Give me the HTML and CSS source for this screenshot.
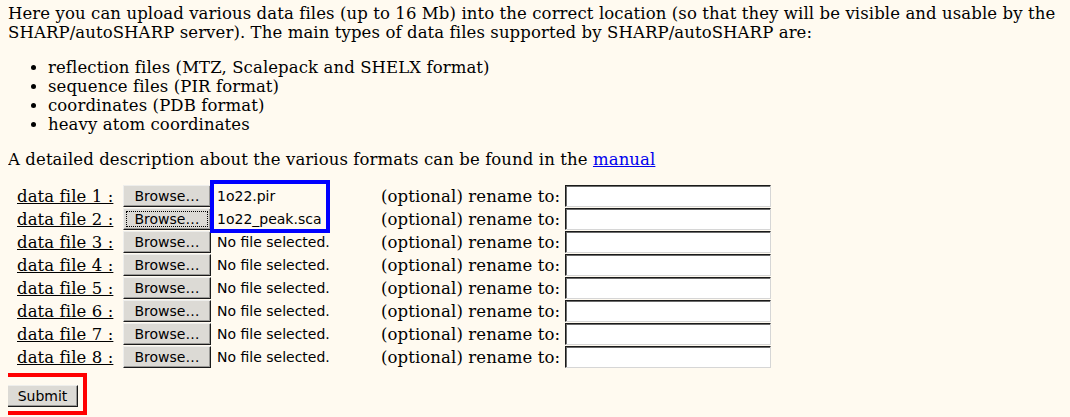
FILE: index.html
```html
<!DOCTYPE html>
<html>
<head>
<meta charset="utf-8">
<title>Upload data files</title>
<link rel="stylesheet" href="styles.css">
</head>
<body>
<p class="intro">Here you can upload various data files (up to 16 Mb) into the correct location (so that they will be visible and usable by the SHARP/autoSHARP server). The main types of data files supported by SHARP/autoSHARP are:</p>
<ul class="types">
  <li>reflection files (MTZ, Scalepack and SHELX format)</li>
  <li>sequence files (PIR format)</li>
  <li>coordinates (PDB format)</li>
  <li>heavy atom coordinates</li>
</ul>
<p class="desc">A detailed description about the various formats can be found in the <a href="#">manual</a></p>
<form class="upload">
  <div class="files">
    <span class="lbl">data file 1 :</span><span class="browse">Browse…</span><span class="fname">1o22.pir</span><span class="ren">(optional) rename to:</span><span class="field"></span>
    <span class="lbl">data file 2 :</span><span class="browse focus">Browse…</span><span class="fname">1o22_peak.sca</span><span class="ren">(optional) rename to:</span><span class="field"></span>
    <span class="lbl">data file 3 :</span><span class="browse">Browse…</span><span class="fname">No file selected.</span><span class="ren">(optional) rename to:</span><span class="field"></span>
    <span class="lbl">data file 4 :</span><span class="browse">Browse…</span><span class="fname">No file selected.</span><span class="ren">(optional) rename to:</span><span class="field"></span>
    <span class="lbl">data file 5 :</span><span class="browse">Browse…</span><span class="fname">No file selected.</span><span class="ren">(optional) rename to:</span><span class="field"></span>
    <span class="lbl">data file 6 :</span><span class="browse">Browse…</span><span class="fname">No file selected.</span><span class="ren">(optional) rename to:</span><span class="field"></span>
    <span class="lbl">data file 7 :</span><span class="browse">Browse…</span><span class="fname">No file selected.</span><span class="ren">(optional) rename to:</span><span class="field"></span>
    <span class="lbl">data file 8 :</span><span class="browse">Browse…</span><span class="fname">No file selected.</span><span class="ren">(optional) rename to:</span><span class="field"></span>
    <div class="hl-blue"></div>
  </div>
</form>
<div class="submit-row">
  <div class="submit-box">
    <span class="submit">Submit</span>
  </div>
</div>
</body>
</html>
```
FILE: styles.css
```css
html, body {
  background: #fffaf0;
}
body {
  margin: 0 6px 0 8px;
  font-family: "DejaVu Serif", serif;
  font-size: 16.5px;
  letter-spacing: 0.1px;
  line-height: 19px;
  color: #000;
}
.intro {
  margin: 0;
  padding-top: 4px;
}
.types {
  margin: 16px 0;
  padding-left: 40px;
}
.desc {
  margin: 16px 0 0 0;
}
.desc a {
  color: #0000ee;
}
.upload {
  margin-top: 16px;
}
.files {
  position: relative;
  display: grid;
  grid-template-columns: 106px 88px 170px 184px 206px;
  grid-auto-rows: 22px;
  row-gap: 1px;
  margin-left: 9px;
  width: max-content;
}
.lbl {
  text-decoration: underline;
  align-self: center;
  white-space: nowrap;
}
.browse, .submit {
  display: flex;
  align-items: center;
  justify-content: center;
  box-sizing: border-box;
  font-family: "DejaVu Sans", sans-serif;
  font-size: 14px;
  letter-spacing: 0;
  background: #dcdad5;
  border: 1px solid;
  border-color: #eeeeec #1a1a1a #1a1a1a #eeeeec;
  box-shadow: inset -1px -1px 0 #9a9996;
  color: #000;
}
.browse.focus {
  outline: 1px dotted #000;
  outline-offset: -4px;
}
.fname {
  font-family: "DejaVu Sans", sans-serif;
  font-size: 14px;
  letter-spacing: 0;
  align-self: center;
  padding-left: 6px;
  white-space: nowrap;
}
.ren {
  align-self: center;
  white-space: nowrap;
}
.field {
  box-sizing: border-box;
  background: #fff;
  border: 1px solid;
  border-color: #1a1a1a #d6d6d6 #d6d6d6 #1a1a1a;
  box-shadow: inset 1px 1px 0 #6b6b6b;
}
.hl-blue {
  position: absolute;
  left: 193px;
  top: -5px;
  width: 120px;
  height: 53px;
  box-sizing: border-box;
  border: 4px solid #0000ff;
  pointer-events: none;
}
.submit-row {
  display: flex;
  margin-left: -8px;
  padding-top: 5px;
}
.submit-box {
  display: flex;
  padding: 8px 5px 4px 3px;
  border: 4px solid #ff0000;
}
.submit {
  width: 71px;
  height: 22px;
}
```
